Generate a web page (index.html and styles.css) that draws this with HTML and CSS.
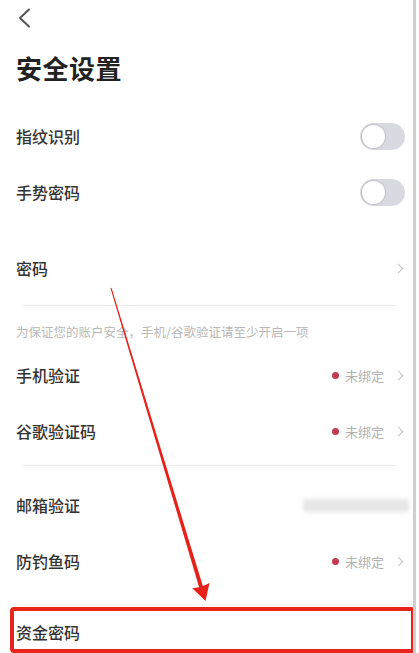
FILE: index.html
```html
<!DOCTYPE html>
<html lang="zh">
<head>
<meta charset="utf-8">
<link rel="stylesheet" href="styles.css">
</head>
<body>
<div class="page">
  <div class="topbar">
    <svg class="back" width="16" height="22" viewBox="0 0 16 22"><path d="M12 2.5 L3 11 L12 19.5" fill="none" stroke="#555" stroke-width="2" stroke-linecap="round" stroke-linejoin="round"/></svg>
  </div>
  <h1 class="title">安全设置</h1>

  <div class="group g1">
    <div class="row"><span class="label">指纹识别</span><span class="toggle"><span class="knob"></span></span></div>
    <div class="row"><span class="label">手势密码</span><span class="toggle"><span class="knob"></span></span></div>
  </div>

  <div class="group g2">
    <div class="row"><span class="label">密码</span><span class="chev"></span></div>
  </div>
  <div class="divider"></div>

  <p class="hint">为保证您的账户安全，手机/谷歌验证请至少开启一项</p>

  <div class="group gv">
    <div class="row"><span class="label">手机验证</span><span class="status"><i class="dot"></i><span class="st">未绑定</span><span class="chev"></span></span></div>
    <div class="row"><span class="label">谷歌验证码</span><span class="status"><i class="dot"></i><span class="st">未绑定</span><span class="chev"></span></span></div>
  </div>
  <div class="divider d2"></div>

  <div class="group g3">
    <div class="row"><span class="label">邮箱验证</span><span class="blurred"></span></div>
    <div class="row"><span class="label">防钓鱼码</span><span class="status"><i class="dot"></i><span class="st">未绑定</span><span class="chev"></span></span></div>
  </div>

  <div class="group g4">
    <div class="row"><span class="label">资金密码</span></div>
  </div>

  <div class="mark-box"></div>
  <svg class="arrow" width="419" height="653" viewBox="0 0 419 653">
    <polygon points="110.5,288.2 111.5,287.8 203.9,589.4 200.1,590.6" fill="#e8201a"/>
    <polygon points="205.5,601 192.3,588.3 201,587 209.5,583.1" fill="#e8201a"/>
  </svg>
</div>
</body>
</html>
```

FILE: styles.css
```css
html, body {
  margin: 0;
  padding: 0;
  background: #fff;
}
body {
  font-family: "Noto Sans CJK SC", "Noto Sans", sans-serif;
  color: #333;
  overflow: hidden;
}
.page {
  position: relative;
  width: 416px;
  height: 653px;
  box-sizing: border-box;
  padding: 0 8px 0 16px;
  border-right: 3px solid #cfcfcf;
  overflow: hidden;
}
.topbar {
  height: 36px;
  display: flex;
  align-items: center;
}
.back {
  margin-left: 1px;
}
.title {
  margin: 14px 0 0;
  font-size: 26px;
  line-height: 36px;
  font-weight: 700;
  color: #222;
  letter-spacing: 0.5px;
}
.group {
  display: flex;
  flex-direction: column;
}
.g1 { margin-top: 22px; }
.g2 { margin-top: 20px; }
.gv { margin-top: 5px; }
.g3 { margin-top: 11px; }
.g4 { margin-top: 15px; }
.row {
  height: 56px;
  display: flex;
  align-items: center;
  justify-content: space-between;
}
.label {
  font-size: 16px;
  font-weight: 500;
  color: #333;
}
.toggle {
  width: 45px;
  height: 27px;
  border-radius: 14px;
  background: #d9d9e1;
  display: flex;
  align-items: center;
  padding-left: 2px;
  box-sizing: border-box;
}
.knob {
  width: 23px;
  height: 23px;
  border-radius: 50%;
  background: #fff;
  box-shadow: 0 0 1px 1px rgba(0,0,0,0.12);
}
.chev {
  width: 6px;
  height: 6px;
  border-top: 1.3px solid #c4c4c4;
  border-right: 1.3px solid #c4c4c4;
  transform: rotate(45deg);
  margin-right: 3px;
}
.divider {
  height: 1px;
  background: #ececec;
  margin: 9px 9px 0 7px;
}
.d2 { margin-top: 6px; }
.hint {
  margin: 16px 0 0;
  font-size: 12.5px;
  line-height: 20px;
  color: #b8b8b8;
}
.status {
  display: flex;
  align-items: center;
}
.dot {
  width: 7px;
  height: 7px;
  border-radius: 50%;
  background: #c43a52;
  margin-right: 6px;
}
.st {
  font-size: 13px;
  color: #b0b0b0;
  margin-right: 11px;
}
.blurred {
  width: 106px;
  height: 13px;
  background: #e6e6e6;
  border-radius: 3px;
  filter: blur(2px);
  margin-right: -4px;
}
.mark-box {
  position: absolute;
  left: 10px;
  top: 607px;
  width: 405px;
  height: 46px;
  box-sizing: border-box;
  border: 4px solid #e8241d;
  border-radius: 4px;
}
.arrow {
  position: absolute;
  left: 0;
  top: 0;
  pointer-events: none;
}
```
